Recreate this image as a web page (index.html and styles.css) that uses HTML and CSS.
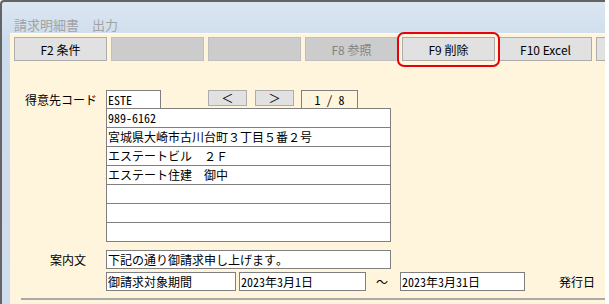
FILE: index.html
```html
<!DOCTYPE html>
<html lang="ja">
<head>
    <meta charset="UTF-8">
    <title>請求明細書 出力</title>
    <link rel="stylesheet" href="styles.css">
</head>
<body>
    <div class="window">
        <div class="menu">請求明細書　出力</div>
        <div class="panel">
            <div class="toolbar">
                <button class="fkey">F2 条件</button>
                <button class="fkey off"></button>
                <button class="fkey off"></button>
                <button class="fkey off">F8 参照</button>
                <span class="mark"><button class="fkey">F9 削除</button></span>
                <button class="fkey">F10 Excel</button>
                <button class="fkey stub"></button>
            </div>

            <div class="form">
                <div class="label code-label">得意先コード</div>
                <div class="field">
                    <div class="code-row">
                        <div class="box code">ESTE</div>
                        <button class="nav prev">＜</button>
                        <button class="nav">＞</button>
                        <div class="page">1 / 8</div>
                    </div>
                    <div class="address">
                        <div class="line">989-6162</div>
                        <div class="line">宮城県大崎市古川台町３丁目５番２号</div>
                        <div class="line">エステートビル　２Ｆ</div>
                        <div class="line">エステート住建　御中</div>
                        <div class="line"></div>
                        <div class="line"></div>
                        <div class="line"></div>
                    </div>
                </div>

                <div class="label note-label">案内文</div>
                <div class="field">
                    <div class="box note">下記の通り御請求申し上げます。</div>
                </div>

                <div class="label"></div>
                <div class="field period">
                    <div class="box term">御請求対象期間</div>
                    <div class="box date">2023年3月1日</div>
                    <span class="tilde">～</span>
                    <div class="box date to">2023年3月31日</div>
                    <span class="issued">発行日</span>
                </div>
            </div>
            <div class="rule"></div>
        </div>
    </div>
</body>
</html>
```

FILE: styles.css
```css
body {
    margin: 0;
    background: #fff;
    font-family: "Noto Sans Mono CJK JP", "Noto Sans CJK JP", monospace;
    font-size: 12px;
    color: #000;
    overflow: hidden;
}
.window {
    width: 603px;
    height: 302px;
    border-top: 2px solid #646464;
    border-left: 2px solid #646464;
    border-top-left-radius: 4px;
    background: linear-gradient(#dbe6f2, #cddcec 40px, #cfdded);
    display: flex;
    flex-direction: column;
}
.menu {
    height: 18px;
    padding: 14px 0 0 12px;
    margin-bottom: -1px;
    font-family: "Noto Sans CJK JP", sans-serif;
    font-size: 13px;
    line-height: 18px;
    color: #a3a3a3;
}
.panel {
    flex: 1;
    margin-left: 8px;
    background: #fef5dc;
    border-top: 1px solid #fffbef;
}
.toolbar {
    display: flex;
    gap: 4px;
    padding: 3px 0 0 4px;
    white-space: nowrap;
}
.fkey {
    flex: none;
    width: 93px;
    height: 24px;
    padding: 0;
    background: #e1e1e1;
    border: 1px solid #adadad;
    border-radius: 0;
    font-family: "Noto Sans CJK JP", sans-serif;
    font-size: 12px;
    color: #000;
}
.fkey.off {
    background: #cccccc;
    border-color: #bfbfbf;
    color: #838383;
}
.fkey.stub {
    width: 9px;
    border-right: none;
}
.mark {
    position: relative;
    display: flex;
}
.mark::after {
    content: "";
    position: absolute;
    left: -5px;
    top: -5px;
    right: -5px;
    bottom: -6px;
    border: 2px solid #e8000b;
    border-radius: 7px;
}
.form {
    display: grid;
    grid-template-columns: 96px 1fr;
    margin-top: 29px;
}
.label {
    font-family: "Noto Sans CJK JP", sans-serif;
    line-height: 18px;
}
.code-label {
    padding: 1px 0 0 15px;
}
.note-label {
    padding: 9px 0 0 40px;
}
.box {
    box-sizing: border-box;
    height: 19px;
    padding-left: 1px;
    background: #fff;
    border: 1px solid #7f7f7f;
    line-height: 17px;
    white-space: nowrap;
}
.code-row {
    display: flex;
    align-items: flex-start;
    height: 18px;
}
.code {
    width: 55px;
    height: 18px;
    border-bottom: none;
}
.nav {
    width: 39px;
    height: 16px;
    padding: 0;
    margin-left: 8px;
    background: #e1e1e1;
    border: 1px solid #adadad;
    font-family: "Noto Sans CJK JP", sans-serif;
    font-size: 12px;
    line-height: 14px;
    color: #000;
}
.nav.prev {
    margin-left: 47px;
}
.page {
    box-sizing: border-box;
    width: 57px;
    height: 18px;
    margin-left: 7px;
    border: 1px solid #7f7f7f;
    border-bottom: none;
    text-align: center;
    line-height: 17px;
}
.address {
    width: 285px;
    box-sizing: border-box;
    border: 1px solid #7f7f7f;
    border-bottom: none;
    background: #fff;
}
.line {
    height: 18px;
    padding-left: 1px;
    border-bottom: 1px solid #7f7f7f;
    line-height: 18px;
    white-space: nowrap;
}
.note {
    width: 285px;
    margin-top: 8px;
}
.period {
    display: flex;
    align-items: center;
    margin-top: 3px;
    height: 19px;
}
.term {
    width: 130px;
}
.date {
    width: 127px;
    margin-left: 3px;
}
.date.to {
    width: 125px;
    margin-left: 0;
}
.tilde {
    width: 34px;
    padding-right: 2px;
    box-sizing: border-box;
    text-align: center;
    font-family: "Noto Sans CJK JP", sans-serif;
}
.issued {
    margin-left: 34px;
    font-family: "Noto Sans CJK JP", sans-serif;
}
.rule {
    margin: 7px 0 0 11px;
    border-top: 2px solid #aaaaaa;
}
```
